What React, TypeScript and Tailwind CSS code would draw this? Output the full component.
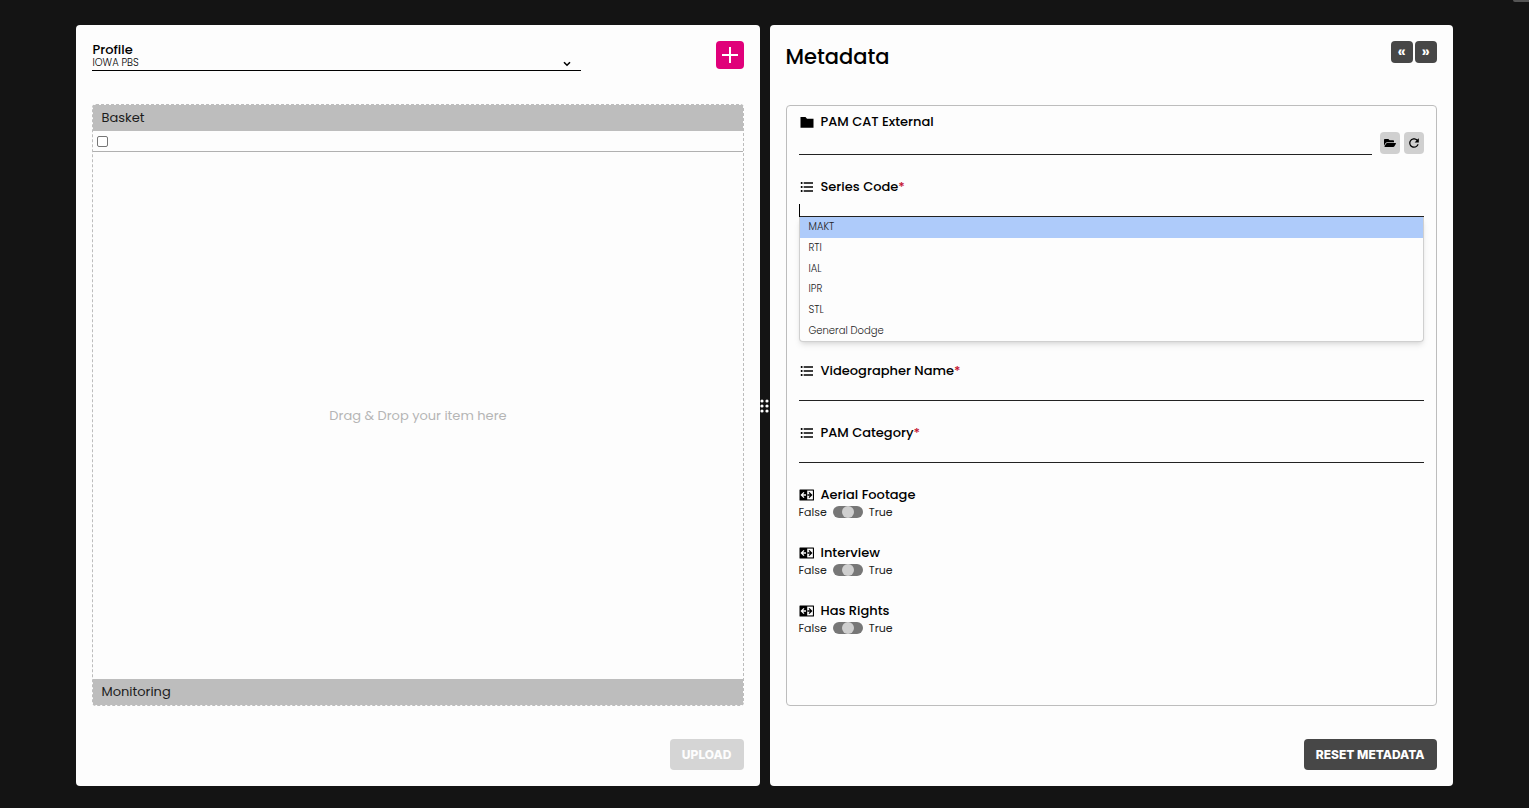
import React, { useState } from "react";
import { clsx } from "clsx";
import { FaFolderOpen } from "react-icons/fa";
import { IoMdRefresh } from "react-icons/io";
import { MdFormatListBulleted } from "react-icons/md";

type FieldKind = "folder" | "list" | "boolean";

const seriesCodes = ["MAKT", "RTI", "IAL", "IPR", "STL", "General Dodge"];
const toggles = [
  { id: "aerial-footage", label: "Aerial Footage" },
  { id: "interview", label: "Interview" },
  { id: "has-rights", label: "Has Rights" },
];

function FieldIcon({ kind }: { kind: FieldKind }) {
  if (kind === "list") {
    return <MdFormatListBulleted className="h-4 w-4 text-black" />;
  }
  if (kind === "folder") {
    return (
      <svg viewBox="0 0 16 16" className="h-4 w-4" aria-hidden="true">
        <path d="M1.5 3h5l1.5 1.7h6.5v9h-13z" fill="#000" />
      </svg>
    );
  }
  return (
    <svg viewBox="0 0 16 16" className="h-4 w-4" aria-hidden="true">
      <rect x="0.5" y="2.5" width="14.5" height="11" rx="0.5" fill="#000" />
      <path d="M8.2 3.6h5.7v8.8H8.2z" fill="#fdfdfd" />
      <path d="M5 5.4 2.4 8 5 10.6M2.8 8H7" fill="none" stroke="#fdfdfd" strokeWidth="1.3" />
      <path d="M10 5.4 12.6 8 10 10.6M12.2 8H8.4" fill="none" stroke="#000" strokeWidth="1.3" />
    </svg>
  );
}

interface FieldLabelProps {
  htmlFor: string;
  kind: FieldKind;
  required?: boolean;
  children: React.ReactNode;
}

function FieldLabel({ htmlFor, kind, required, children }: FieldLabelProps) {
  return (
    <label htmlFor={htmlFor} className="flex h-5 items-center gap-1.5 text-[13px] font-medium text-black">
      <FieldIcon kind={kind} />
      <span>
        {children}
        {required && <span className="text-[#c4122f]">*</span>}
      </span>
    </label>
  );
}

const inputClass = "block h-5 w-full border-b border-[#222] bg-transparent text-[10px] outline-none";

function ProfilePanel() {
  return (
    <section className="flex min-w-0 flex-1 flex-col rounded bg-[#fdfdfd] p-4">
      <div className="flex items-start justify-between">
        <div className="w-3/4">
          <label htmlFor="profile" className="block text-[13px] leading-[17px] font-medium text-black">
            Profile
          </label>
          <div className="relative">
            <select
              id="profile"
              className="block h-[13px] w-full appearance-none border-b border-black bg-transparent pb-0.5 text-[10px] leading-[10px] font-light text-black outline-none"
            >
              <option>IOWA PBS</option>
            </select>
            <svg
              viewBox="0 0 8 6"
              className="pointer-events-none absolute right-2.5 bottom-1 h-1.5 w-2"
              aria-hidden="true"
            >
              <path d="m1 1.2 3 3 3-3" fill="none" stroke="#000" strokeWidth="1.6" />
            </svg>
          </div>
        </div>
        <button
          type="button"
          aria-label="Add profile"
          className="flex h-7 w-7 items-center justify-center rounded bg-[#e0007a]"
        >
          <svg viewBox="0 0 18 18" className="h-[18px] w-[18px]" aria-hidden="true">
            <path d="M9 1v16M1 9h16" stroke="#fff" strokeWidth="2" />
          </svg>
        </button>
      </div>

      {/* Basket */}
      <div className="mt-[33px] flex flex-1 flex-col rounded border border-dashed border-[#bdbdbd]">
        <h2 className="flex h-[26px] items-center bg-[#bdbdbd] px-2 text-[13px] text-[#1c1c1c]">Basket</h2>
        <div className="flex h-[21px] items-center border-b border-[#b0b0b0] px-1">
          <input
            type="checkbox"
            aria-label="Select all items"
            className="h-[11px] w-[11px] appearance-none rounded-xs border border-[#767676] bg-white"
          />
        </div>
        <div className="flex flex-1 items-center justify-center text-[13px] text-[#b5b5b5]">
          Drag &amp; Drop your item here
        </div>
        <h2 className="flex h-[26px] items-center bg-[#bdbdbd] px-2 text-[13px] text-[#1c1c1c]">Monitoring</h2>
      </div>

      <div className="mt-[33px] flex justify-end">
        <button
          type="button"
          disabled
          className="h-[31px] rounded bg-[#d5d5d5] px-3 font-[Inter,sans-serif] text-xs font-extrabold text-[#fdfdfd]"
        >
          UPLOAD
        </button>
      </div>
    </section>
  );
}

function SeriesCodeField() {
  const [active, setActive] = useState("MAKT");

  return (
    <div className="mb-[122px]">
      <FieldLabel htmlFor="series-code" kind="list" required>
        Series Code
      </FieldLabel>
      <div className="relative">
        <input id="series-code" role="combobox" aria-expanded="true" aria-controls="series-list" className={inputClass} />
        <span className="absolute bottom-0 left-0 h-[13px] w-px bg-black" />
        <ul
          id="series-list"
          role="listbox"
          className="absolute top-full left-0 z-10 grid h-[125px] w-full auto-rows-fr rounded-b border border-t-0 border-[#d0d0d0] bg-[#fdfdfd] shadow-md"
        >
          {seriesCodes.map((code) => (
            <li
              key={code}
              role="option"
              aria-selected={code === active}
              onMouseEnter={() => setActive(code)}
              className={clsx(
                "flex items-center px-[9px] text-[10px] leading-3 font-light text-[#222]",
                code === active && "bg-[#aecbfa]"
              )}
            >
              {code}
            </li>
          ))}
        </ul>
      </div>
    </div>
  );
}

function MetadataPanel() {
  return (
    <section className="flex min-w-0 flex-1 flex-col rounded bg-[#fdfdfd] p-4">
      <div className="flex h-7 items-start justify-between">
        <h1 className="text-[21px] leading-8 font-medium text-black">Metadata</h1>
        <div className="flex gap-0.5 text-base font-semibold text-white">
          <button type="button" aria-label="Previous" className="h-[22px] w-[22px] rounded bg-[#474747] leading-5">
            «
          </button>
          <button type="button" aria-label="Next" className="h-[22px] w-[22px] rounded bg-[#474747] leading-5">
            »
          </button>
        </div>
      </div>

      <form className="mt-9 flex flex-1 flex-col gap-[22px] rounded border border-[#bdbdbd] px-3 py-1.5">
        <div>
          <FieldLabel htmlFor="pam-cat" kind="folder">
            PAM CAT External
          </FieldLabel>
          <div className="flex gap-1">
            <input
              id="pam-cat"
              className="mr-1 h-[23px] min-w-0 flex-1 border-b border-[#222] bg-transparent text-[10px] outline-none"
            />
            <button
              type="button"
              aria-label="Browse"
              className="flex h-[22px] w-5 items-center justify-center rounded bg-[#d0d0d0]"
            >
              <FaFolderOpen className="h-3 w-3" />
            </button>
            <button
              type="button"
              aria-label="Refresh"
              className="flex h-[22px] w-5 items-center justify-center rounded bg-[#d0d0d0]"
            >
              <IoMdRefresh className="h-3.5 w-3.5" />
            </button>
          </div>
        </div>

        <SeriesCodeField />

        <div>
          <FieldLabel htmlFor="videographer" kind="list" required>
            Videographer Name
          </FieldLabel>
          <input id="videographer" className={inputClass} />
        </div>
        <div>
          <FieldLabel htmlFor="pam-category" kind="list" required>
            PAM Category
          </FieldLabel>
          <input id="pam-category" className={inputClass} />
        </div>

        {toggles.map((toggle) => (
          <div key={toggle.id} className="pb-0.5">
            <FieldLabel htmlFor={toggle.id} kind="boolean">
              {toggle.label}
            </FieldLabel>
            <div className="flex h-3.5 items-center gap-1.5 text-[11px] text-[#222]">
              <span>False</span>
              {/* three positions: false, unset, true */}
              <input
                id={toggle.id}
                type="range"
                min={-1}
                max={1}
                defaultValue={0}
                className="h-3 w-[30px] appearance-none rounded-full bg-[#777] [&::-webkit-slider-thumb]:h-3 [&::-webkit-slider-thumb]:w-3 [&::-webkit-slider-thumb]:appearance-none [&::-webkit-slider-thumb]:rounded-full [&::-webkit-slider-thumb]:bg-[#cfcfcf]"
              />
              <span>True</span>
            </div>
          </div>
        ))}
      </form>

      <div className="mt-[33px] flex justify-end">
        <button
          type="button"
          className="h-[31px] rounded bg-[#474747] px-3 font-[Inter,sans-serif] text-xs font-extrabold text-white"
        >
          RESET METADATA
        </button>
      </div>
    </section>
  );
}

export default function App() {
  return (
    <main className="relative flex min-h-screen bg-[#141414] pt-[25px] pb-[22px] font-[Poppins,Inter,sans-serif]">
      <div className="absolute top-0 right-0 h-0.5 w-4 rounded-bl bg-[#555]" />
      <div className="mx-auto flex w-[90%]">
        <ProfilePanel />
        <button
          type="button"
          aria-label="Resize panels"
          className="flex w-2.5 cursor-col-resize items-center justify-center"
        >
          <svg viewBox="0 0 9 14" className="h-3.5 w-[9px]" fill="#fff" aria-hidden="true">
            <circle cx="2" cy="2" r="1.6" />
            <circle cx="7" cy="2" r="1.6" />
            <circle cx="2" cy="7" r="1.6" />
            <circle cx="7" cy="7" r="1.6" />
            <circle cx="2" cy="12" r="1.6" />
            <circle cx="7" cy="12" r="1.6" />
          </svg>
        </button>
        <MetadataPanel />
      </div>
    </main>
  );
}
